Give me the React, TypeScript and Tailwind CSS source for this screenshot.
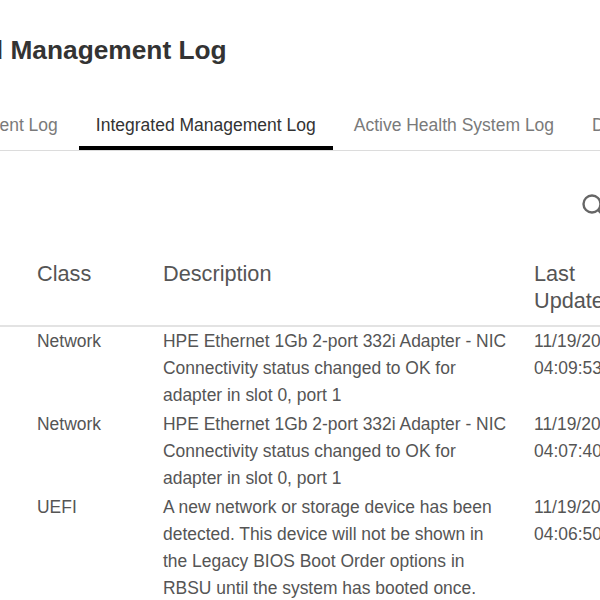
import React from "react";

const rows = [
  { cls: "Network", lines: ["HPE Ethernet 1Gb 2-port 332i Adapter - NIC", "Connectivity status changed to OK for", "adapter in slot 0, port 1"], d: "11/19/2020", t: "04:09:53" },
  { cls: "Network", lines: ["HPE Ethernet 1Gb 2-port 332i Adapter - NIC", "Connectivity status changed to OK for", "adapter in slot 0, port 1"], d: "11/19/2020", t: "04:07:40" },
  { cls: "UEFI", lines: ["A new network or storage device has been", "detected. This device will not be shown in", "the Legacy BIOS Boot Order options in", "RBSU until the system has booted once."], d: "11/19/2020", t: "04:06:50" },
];

function Tab({ label, active }: { label: string; active?: boolean }) {
  return (
    <div className={active ? "px-[17px] h-[50px] pt-[10px] border-b-4 border-black text-[#333333] whitespace-nowrap" : "px-[17px] h-[50px] pt-[10px] text-[#7a7a7a] whitespace-nowrap"}>
      {label}
    </div>
  );
}

export default function App() {
  return (
    <div className="w-[600px] h-[600px] overflow-hidden bg-white font-['Liberation_Sans',Arial,sans-serif]">
      <div className="w-[900px] ml-[-210px] pt-[32px]">
        <h1 className="text-[26.3px] leading-[36px] font-bold text-[#333333] ml-[86px] whitespace-nowrap">Integrated Management Log</h1>
        <div className="mt-[32px] flex gap-[4px] text-[17.5px] leading-[30px] border-b border-[#dcdcdc] h-[51px] pl-[172px]">
          <Tab label="Event Log" />
          <Tab label="Integrated Management Log" active />
          <Tab label="Active Health System Log" />
          <Tab label="Diagnostics" />
        </div>
        <div className="h-[109px] flex items-start justify-end pr-[85px] pt-[42px]">
          <svg width="24" height="24" viewBox="0 0 24 24" fill="none" stroke="#666" strokeWidth="2.4"><circle cx="11" cy="11" r="8.5" /><path d="M17 17l6 6" /></svg>
        </div>
        <div className="flex text-[21.7px] leading-[27px] text-[#555555] h-[67px] border-b-2 border-[#e3e3e3] pl-[247px]">
          <div className="w-[126px]">Class</div>
          <div className="w-[371px]">Description</div>
          <div className="w-[100px]">Last<br />Updated</div>
        </div>
        <div className="pt-[1px]">
          {rows.map((r, i) => (
            <div key={i} className="flex pl-[247px] text-[17.45px] leading-[27px] text-[#555555] pb-[2px]">
              <div className="w-[126px]">{r.cls}</div>
              <div className="w-[371px]">
                {r.lines.map((l) => (<div key={l} className="whitespace-nowrap">{l}</div>))}
              </div>
              <div className="w-[100px]">
                <div>{r.d}</div>
                <div>{r.t}</div>
              </div>
            </div>
          ))}
        </div>
      </div>
    </div>
  );
}
